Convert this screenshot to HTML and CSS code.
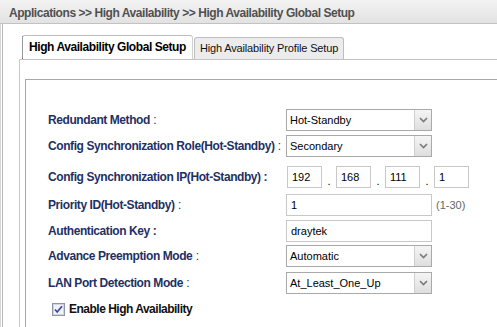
FILE: index.html
```html
<!DOCTYPE html>
<html>
<head>
<meta charset="utf-8">
<link rel="stylesheet" href="styles.css">
</head>
<body>
<div class="crumb">Applications &gt;&gt; High Availability &gt;&gt; High Availability Global Setup</div>
<div class="frame">
  <div class="tabs">
    <div class="tab active">High Availability Global Setup</div>
    <div class="tab">High Availability Profile Setup</div>
  </div>
  <div class="panel">
    <div class="box">
      <div class="row r1">
        <div class="label"><b>Redundant Method</b> :</div>
        <div class="select"><span class="val">Hot-Standby</span><span class="arrow"><svg width="9" height="6" viewBox="0 0 9 6"><path d="M1 1 L4.5 4.5 L8 1" fill="none" stroke="#7a7a7a" stroke-width="1.6"/></svg></span></div>
      </div>
      <div class="row r2">
        <div class="label"><b>Config Synchronization Role(Hot-Standby)</b> :</div>
        <div class="select"><span class="val">Secondary</span><span class="arrow"><svg width="9" height="6" viewBox="0 0 9 6"><path d="M1 1 L4.5 4.5 L8 1" fill="none" stroke="#7a7a7a" stroke-width="1.6"/></svg></span></div>
      </div>
      <div class="row r3">
        <div class="label"><b>Config Synchronization IP(Hot-Standby) :</b></div>
        <div class="ip">
          <div class="oct">192</div><span class="dot">.</span>
          <div class="oct">168</div><span class="dot">.</span>
          <div class="oct">111</div><span class="dot">.</span>
          <div class="oct">1</div>
        </div>
      </div>
      <div class="row r4">
        <div class="label"><b>Priority ID(Hot-Standby)</b> :</div>
        <div class="input">1</div><span class="hint">(1-30)</span>
      </div>
      <div class="row r5">
        <div class="label"><b>Authentication Key :</b></div>
        <div class="input">draytek</div>
      </div>
      <div class="row r6">
        <div class="label"><b>Advance Preemption Mode</b> :</div>
        <div class="select"><span class="val">Automatic</span><span class="arrow"><svg width="9" height="6" viewBox="0 0 9 6"><path d="M1 1 L4.5 4.5 L8 1" fill="none" stroke="#7a7a7a" stroke-width="1.6"/></svg></span></div>
      </div>
      <div class="row r7">
        <div class="label"><b>LAN Port Detection Mode</b> :</div>
        <div class="select"><span class="val">At_Least_One_Up</span><span class="arrow"><svg width="9" height="6" viewBox="0 0 9 6"><path d="M1 1 L4.5 4.5 L8 1" fill="none" stroke="#7a7a7a" stroke-width="1.6"/></svg></span></div>
      </div>
      <div class="check">
        <svg class="cb" width="13" height="13" viewBox="0 0 13 13"><rect x="0.5" y="0.5" width="12" height="12" fill="#e4e6ec" stroke="#8e95a8"/><rect x="1.5" y="1.5" width="10" height="10" fill="#f1f2f6" stroke="#d0d4de"/><path d="M3 6.5 L5.2 9 L10 3.2" fill="none" stroke="#3547a8" stroke-width="1.7"/></svg>
        <span>Enable High Availability</span>
      </div>
    </div>
  </div>
</div>
</body>
</html>
```
FILE: styles.css
```css
html, body { margin: 0; padding: 0; }
body {
  width: 497px; height: 327px; overflow: hidden;
  background: #fff;
  font-family: "Liberation Sans", Arial, sans-serif;
  font-size: 11px;
  color: #000;
}
.crumb {
  height: 23px;
  line-height: 26px;
  padding-left: 9px;
  background: linear-gradient(#f3f3f3, #e2e2e2);
  font-weight: bold;
  font-size: 12px;
  letter-spacing: -0.45px;
  color: #505050;
  border-bottom: 1px solid #c2c2c2;
  white-space: nowrap;
}
.frame {
  border-left: 1px solid #d6d6d6;
  box-shadow: inset 1px 0 0 #fff, inset 2px 0 0 #b8b8b8;
  height: 303px;
  padding-left: 18px;
  padding-top: 11px;
}
.tabs { display: flex; align-items: flex-end; padding-left: 3px; height: 24px; }
.tab {
  height: 21px; line-height: 21px;
  padding: 0 5px 0 5px;
  margin-left: 1px;
  background: #ececec;
  border: 1px solid #bdbdbd;
  border-bottom: none;
  border-radius: 3px 3px 0 0;
  white-space: nowrap;
  letter-spacing: -0.15px;
  color: #111;
}
.tab.active {
  height: 23px; line-height: 23px;
  margin-left: 0;
  background: #fff;
  font-weight: bold;
  font-size: 12px;
  letter-spacing: -0.43px;
  border-left: 1px dotted #333;
  padding: 0 6px;
  color: #000;
  border-right: 1px solid #d0d0d0;
}
.panel {
  border-left: 1px solid #c8c8c8;
  border-top: 1px solid #c4c4c4;
  padding: 19px 0 0 5px;
  height: 260px;
}
.box {
  border: 1px solid #92abd0;
  border-right: none;
  height: 260px;
  padding: 29px 0 0 22px;
  box-sizing: border-box;
}
.row { display: flex; align-items: center; height: 22px; }
.label { width: 238px; color: #1f3064; white-space: nowrap; font-size: 12px; }
.label b { font-weight: bold; letter-spacing: -0.42px; }
.r2 { margin-top: 4px; }
.r3 { margin-top: 9px; }
.r4 { margin-top: 6px; }
.r5 { margin-top: 4px; }
.r6 { margin-top: 3px; }
.r7 { margin-top: 5px; }
.select {
  width: 144px; height: 20px;
  border: 1px solid #a9a9a9;
  display: flex;
}
.select .val { flex: 1; padding-left: 3px; line-height: 20px; }
.select .arrow {
  width: 16px;
  border-left: 1px solid #cfcfcf;
  background: linear-gradient(#f5f5f5, #dedede);
  display: flex; align-items: center; justify-content: center;
}
.input {
  width: 140px; height: 20px; line-height: 20px;
  border: 1px solid #c8c8c8;
  padding-left: 4px;
}
.hint { color: #666; margin-left: 4px; }
.ip { display: flex; align-items: flex-end; margin-left: 1px; }
.oct {
  width: 29px; height: 20px; line-height: 20px;
  border: 1px solid #c8c8c8;
  padding-left: 4px;
}
.dot { width: 14px; text-align: center; line-height: 14px; }
.check {
  display: flex; align-items: center;
  margin-top: 8px; margin-left: 4px;
  font-weight: bold; color: #111;
  font-size: 12px;
  letter-spacing: -0.5px;
}
.cb { margin-right: 4px; }
```
